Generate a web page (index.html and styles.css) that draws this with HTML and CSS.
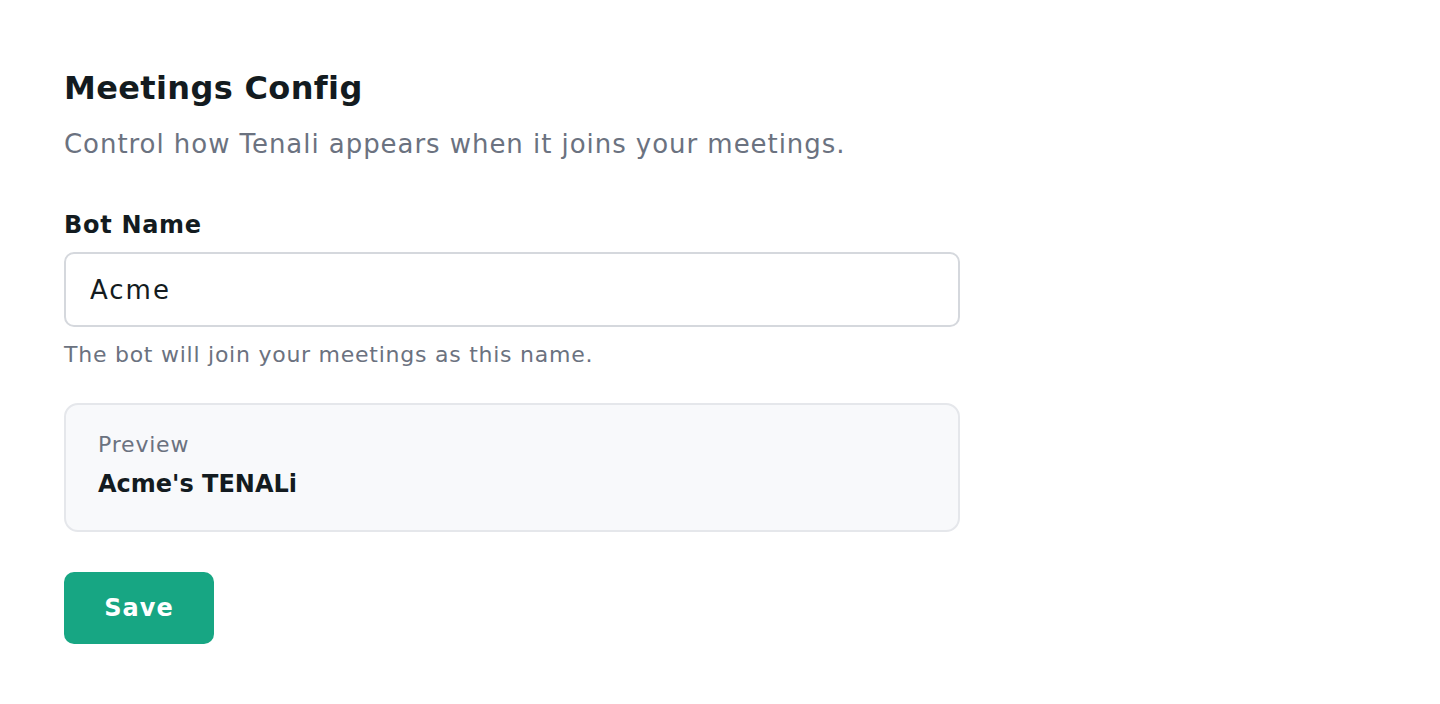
FILE: index.html
```html
<!DOCTYPE html>
<html lang="en">
<head>
<meta charset="utf-8">
<title>Meetings Config</title>
<link rel="stylesheet" href="styles.css">
</head>
<body>
<main class="page">
  <section class="config">
    <h1 class="title">Meetings Config</h1>
    <p class="subtitle">Control how Tenali appears when it joins your meetings.</p>
    <div class="field">
      <label class="label" for="bot-name">Bot Name</label>
      <input class="input" id="bot-name" type="text" value="Acme">
      <p class="help">The bot will join your meetings as this name.</p>
    </div>
    <div class="preview">
      <span class="preview-label">Preview</span>
      <span class="preview-value">Acme's TENALi</span>
    </div>
    <div class="actions">
      <button class="save" type="button">Save</button>
    </div>
  </section>
</main>
</body>
</html>
```

FILE: styles.css
```css
* { box-sizing: border-box; }
html, body { margin: 0; padding: 0; background: #ffffff; }
body {
  font-family: "DejaVu Sans", "Open Sans", sans-serif;
  color: #131b20;
}
.page {
  padding: 64px 64px;
}
.config {
  width: 896px;
  display: flex;
  flex-direction: column;
}
.title {
  margin: 0;
  font-size: 32px;
  line-height: 48px;
  font-weight: 700;
  color: #131b20;
  letter-spacing: 0.35px;
}
.subtitle {
  margin: 14px 0 0;
  font-size: 26px;
  line-height: 36px;
  color: #6b7280;
  letter-spacing: 0.95px;
}
.field {
  margin-top: 47px;
  display: flex;
  flex-direction: column;
}
.label {
  font-size: 24px;
  line-height: 32px;
  font-weight: 700;
  color: #131b20;
  letter-spacing: 0.7px;
}
.input {
  margin-top: 11px;
  height: 75px;
  width: 100%;
  border: 2px solid #d5d8dd;
  border-radius: 10px;
  padding: 0 24px;
  font-family: inherit;
  font-size: 26px;
  letter-spacing: 2px;
  color: #131b20;
  background: #fff;
  outline: none;
}
.help {
  margin: 13px 0 0;
  font-size: 22px;
  line-height: 30px;
  color: #6b7280;
  letter-spacing: 0.75px;
}
.preview {
  margin-top: 33px;
  border: 2px solid #e5e7eb;
  border-radius: 14px;
  background: #f8f9fb;
  padding: 24px 32px 28px;
  display: flex;
  flex-direction: column;
  gap: 5px;
}
.preview-label {
  font-size: 22px;
  line-height: 32px;
  color: #6b7280;
  letter-spacing: 0.8px;
}
.preview-value {
  font-size: 24px;
  line-height: 36px;
  font-weight: 600;
  color: #131b20;
}
.actions {
  margin-top: 40px;
  display: flex;
}
.save {
  width: 150px;
  height: 72px;
  border: none;
  border-radius: 10px;
  background: #17a683;
  color: #ffffff;
  font-family: inherit;
  font-size: 24px;
  font-weight: 700;
  letter-spacing: 1px;
  cursor: pointer;
}
```
